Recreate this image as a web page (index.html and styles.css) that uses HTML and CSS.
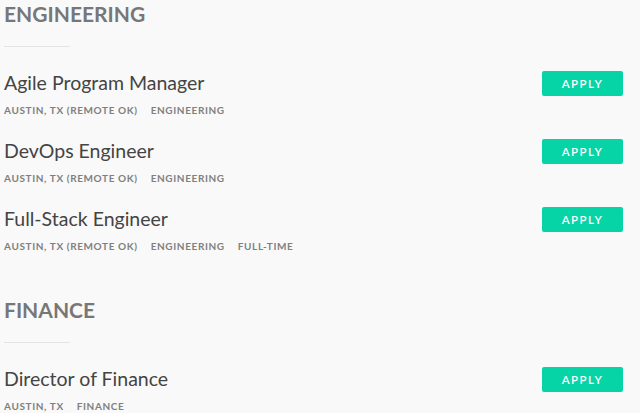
FILE: index.html
```html
<!DOCTYPE html>
<html lang="en">
<head>
    <meta charset="UTF-8">
    <meta name="viewport" content="width=device-width, initial-scale=1.0">
    <title>Open Positions</title>
    <link rel="stylesheet" href="styles.css">
</head>
<body>
    <div class="careers">
        <!-- Engineering -->
        <section class="dept">
            <h2 class="dept-title">Engineering</h2>
            <div class="dept-rule"></div>
            <ul class="jobs">
                <li class="job">
                    <div class="job-info">
                        <h3 class="job-title">Agile Program Manager</h3>
                        <div class="job-meta">
                            <span>Austin, TX (Remote OK)</span>
                            <span>Engineering</span>
                        </div>
                    </div>
                    <a href="#" class="apply-btn">Apply</a>
                </li>
                <li class="job">
                    <div class="job-info">
                        <h3 class="job-title">DevOps Engineer</h3>
                        <div class="job-meta">
                            <span>Austin, TX (Remote OK)</span>
                            <span>Engineering</span>
                        </div>
                    </div>
                    <a href="#" class="apply-btn">Apply</a>
                </li>
                <li class="job">
                    <div class="job-info">
                        <h3 class="job-title">Full-Stack Engineer</h3>
                        <div class="job-meta">
                            <span>Austin, TX (Remote OK)</span>
                            <span>Engineering</span>
                            <span>Full-time</span>
                        </div>
                    </div>
                    <a href="#" class="apply-btn">Apply</a>
                </li>
            </ul>
        </section>

        <!-- Finance -->
        <section class="dept">
            <h2 class="dept-title">Finance</h2>
            <div class="dept-rule"></div>
            <ul class="jobs">
                <li class="job">
                    <div class="job-info">
                        <h3 class="job-title">Director of Finance</h3>
                        <div class="job-meta">
                            <span>Austin, TX</span>
                            <span>Finance</span>
                        </div>
                    </div>
                    <a href="#" class="apply-btn">Apply</a>
                </li>
            </ul>
        </section>
    </div>
</body>
</html>
```

FILE: styles.css
```css
body {
    font-family: Lato, "Open Sans", sans-serif;
    margin: 0;
    padding: 0;
    background-color: #f9f9f9;
}
.careers {
    padding: 1px 17px 0 4px;
}
.dept {
    margin-bottom: 45px;
}
.dept-title {
    margin: 0;
    font-size: 21px;
    line-height: 26px;
    font-weight: bold;
    text-transform: uppercase;
    color: #777;
}
.dept-rule {
    width: 66px;
    height: 1px;
    margin: 19px 0 24px;
    background: #e4e4e4;
}
.jobs {
    list-style: none;
    margin: 0;
    padding: 0;
    display: flex;
    flex-direction: column;
    gap: 23px;
}
.job {
    display: flex;
    justify-content: space-between;
    align-items: flex-start;
}
.job-title {
    margin: 0;
    font-size: 19.5px;
    line-height: 23px;
    font-weight: normal;
    color: #444;
}
.job-meta {
    margin-top: 10px;
    display: flex;
    gap: 13px;
    font-size: 10px;
    line-height: 12px;
    font-weight: bold;
    text-transform: uppercase;
    letter-spacing: 0.62px;
    color: #808080;
}
.apply-btn {
    display: block;
    width: 81px;
    height: 25px;
    line-height: 25px;
    text-align: center;
    border-radius: 2px;
    background: #07d4a6;
    color: #fff;
    font-size: 11.5px;
    font-weight: 600;
    letter-spacing: 1.5px;
    text-decoration: none;
    text-transform: uppercase;
}
```
